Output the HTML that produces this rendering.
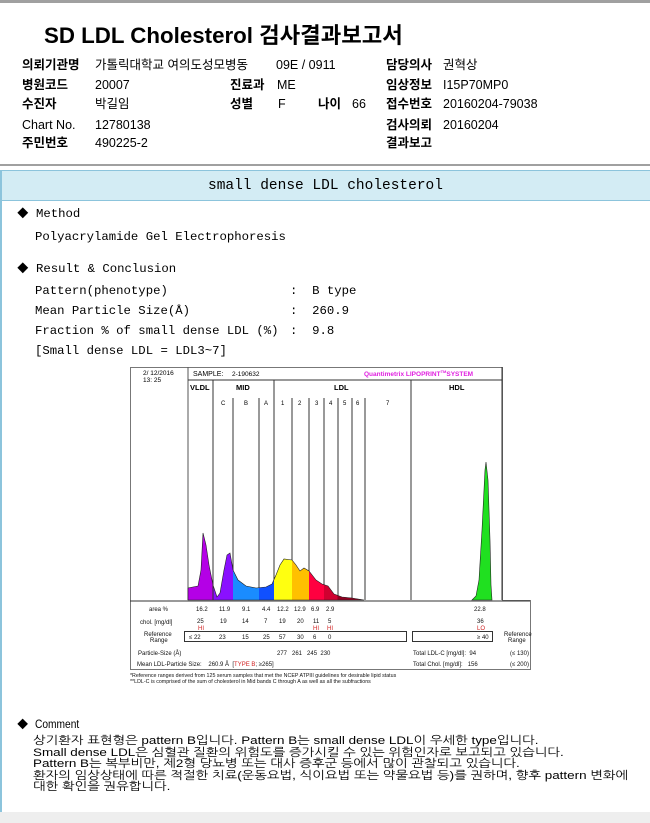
<!DOCTYPE html>
<html><head><meta charset="utf-8"><style>
body{margin:0;width:650px;height:823px;position:relative;background:#fff;overflow:hidden;font-family:"Liberation Sans","Noto Sans CJK KR",sans-serif;color:#000}
.a{position:absolute;white-space:nowrap}
.h{font-size:12.5px;line-height:15px}
.b{font-weight:bold}
.m{font-family:"Liberation Mono","NanumGothic",monospace;font-size:12.3px;line-height:15px}
.c{font-family:"Liberation Sans","NanumGothic",sans-serif;font-size:11.2px;line-height:11.6px;transform:scaleX(1.2);transform-origin:0 0}
svg text{font-family:"Liberation Sans",sans-serif}
</style></head><body>
<div class="a" style="left:0;top:0;width:650px;height:3px;background:#a0a0a0"></div>
<div class="a b" style="left:44px;top:22px;font-size:22.3px;line-height:28px;font-family:'Liberation Sans','Noto Sans CJK KR',sans-serif">SD LDL Cholesterol 검사결과보고서</div>

<div class="a h b" style="left:22px;top:58px">의뢰기관명</div><div class="a h" style="left:95px;top:58px">가톨릭대학교 여의도성모병동</div><div class="a h" style="left:276px;top:58px">09E / 0911</div>
<div class="a h b" style="left:386px;top:58px">담당의사</div><div class="a h" style="left:443px;top:58px">권혁상</div>
<div class="a h b" style="left:22px;top:78px">병원코드</div><div class="a h" style="left:95px;top:78px">20007</div><div class="a h b" style="left:230px;top:78px">진료과</div><div class="a h" style="left:277px;top:78px">ME</div>
<div class="a h b" style="left:386px;top:78px">임상정보</div><div class="a h" style="left:443px;top:78px">I15P70MP0</div>
<div class="a h b" style="left:22px;top:97px">수진자</div><div class="a h" style="left:95px;top:97px">박길임</div><div class="a h b" style="left:230px;top:97px">성별</div><div class="a h" style="left:278px;top:97px">F</div><div class="a h b" style="left:318px;top:97px">나이</div><div class="a h" style="left:352px;top:97px">66</div>
<div class="a h b" style="left:386px;top:97px">접수번호</div><div class="a h" style="left:443px;top:97px">20160204-79038</div>
<div class="a h" style="left:22px;top:118px">Chart No.</div><div class="a h" style="left:95px;top:118px">12780138</div>
<div class="a h b" style="left:386px;top:118px">검사의뢰</div><div class="a h" style="left:443px;top:118px">20160204</div>
<div class="a h b" style="left:22px;top:136px">주민번호</div><div class="a h" style="left:95px;top:136px">490225-2</div>
<div class="a h b" style="left:386px;top:136px">결과보고</div>

<div class="a" style="left:0;top:164px;width:650px;height:2px;background:#a0a0a0"></div>
<div class="a" style="left:0;top:170px;width:650px;height:29px;background:#d3ecf4;border-top:1px solid #8cc4dc;border-bottom:1px solid #8cc4dc"></div>
<div class="a" style="left:0;top:170px;width:2px;height:642px;background:#8cc4dc"></div>
<div class="a m" style="left:208px;top:177px;font-size:14.5px;line-height:18px">small dense LDL cholesterol</div>

<div class="a m" style="left:17px;top:207px">◆ Method</div>
<div class="a m" style="left:35px;top:230px">Polyacrylamide Gel Electrophoresis</div>
<div class="a m" style="left:17px;top:262px">◆ Result &amp; Conclusion</div>
<div class="a m" style="left:35px;top:284px">Pattern(phenotype)</div><div class="a m" style="left:290px;top:284px">:&nbsp; B type</div>
<div class="a m" style="left:35px;top:304px">Mean Particle Size(Å)</div><div class="a m" style="left:290px;top:304px">:&nbsp; 260.9</div>
<div class="a m" style="left:35px;top:324px">Fraction % of small dense LDL (%)</div><div class="a m" style="left:290px;top:324px">:&nbsp; 9.8</div>
<div class="a m" style="left:35px;top:344px">[Small dense LDL = LDL3~7]</div>

<svg class="a" style="left:0;top:0" width="650" height="823">
<defs><linearGradient id="g" gradientUnits="userSpaceOnUse" x1="188" x2="364" y1="0" y2="0">
<stop offset="0" stop-color="#b400e6"/><stop offset="0.142" stop-color="#b400e6"/>
<stop offset="0.142" stop-color="#8a10ff"/><stop offset="0.256" stop-color="#8a10ff"/>
<stop offset="0.256" stop-color="#1a8cff"/><stop offset="0.403" stop-color="#1a8cff"/>
<stop offset="0.403" stop-color="#1050ff"/><stop offset="0.489" stop-color="#1050ff"/>
<stop offset="0.489" stop-color="#ffff10"/><stop offset="0.591" stop-color="#ffff10"/>
<stop offset="0.591" stop-color="#ffc000"/><stop offset="0.688" stop-color="#ffc000"/>
<stop offset="0.688" stop-color="#ff0040"/><stop offset="0.773" stop-color="#ff0040"/>
<stop offset="0.773" stop-color="#d00030"/><stop offset="0.85" stop-color="#d00030"/>
<stop offset="0.85" stop-color="#900020"/><stop offset="1" stop-color="#900020"/>
</linearGradient></defs>
<path d="M130.5,367.5 H502.5 V600.5 H530.5 V669.5 H130.5 Z" fill="#fff" stroke="#777"/>
<line x1="188" y1="367" x2="188" y2="600" stroke="#555"/>
<line x1="188" y1="380" x2="502" y2="380" stroke="#333"/>
<line x1="502" y1="367" x2="502" y2="600" stroke="#333"/>
<text x="143" y="375" font-size="6.5">2/ 12/2016</text><text x="143" y="382" font-size="6.5">13: 25</text>
<text x="193" y="376" font-size="7">SAMPLE:</text><text x="232" y="376" font-size="6.5">2-190632</text>
<text x="364" y="376" font-size="6.5" fill="#e020e0" font-weight="bold">Quantimetrix LIPOPRINT<tspan font-size="4" dy="-3">TM</tspan><tspan dy="3">SYSTEM</tspan></text>
<g stroke="#333"><line x1="213" y1="380" x2="213" y2="600"/><line x1="274" y1="380" x2="274" y2="600"/><line x1="411" y1="380" x2="411" y2="600"/>
<line x1="233" y1="398" x2="233" y2="600"/><line x1="259" y1="398" x2="259" y2="600"/><line x1="292" y1="398" x2="292" y2="600"/><line x1="309" y1="398" x2="309" y2="600"/><line x1="324" y1="398" x2="324" y2="600"/><line x1="338" y1="398" x2="338" y2="600"/><line x1="352" y1="398" x2="352" y2="600"/><line x1="365" y1="398" x2="365" y2="600"/></g>
<g font-size="7.5" font-weight="bold"><text x="190" y="390">VLDL</text><text x="236" y="390">MID</text><text x="334" y="390">LDL</text><text x="449" y="390">HDL</text></g>
<g font-size="6"><text x="221" y="405">C</text><text x="244" y="405">B</text><text x="264" y="405">A</text><text x="281" y="405">1</text><text x="298" y="405">2</text><text x="315" y="405">3</text><text x="329" y="405">4</text><text x="343" y="405">5</text><text x="356" y="405">6</text><text x="386" y="405">7</text></g>
<path d="M188,600 L188,588 L198,586 L201,570 L203,533 L206,545 L209,565 L213,585 L217,597 L220,593 L224,570 L227,555 L230,553 L233,570 L238,580 L246,586 L256,588 L266,587 L272,584 L276,575 L280,565 L284,559 L292,560 L296,565 L300,571 L304,568 L309,571 L316,580 L322,584 L328,586 L334,594 L342,597 L352,598 L364,600 Z" fill="url(#g)" stroke="#222" stroke-width="0.6"/>
<line x1="213" y1="580" x2="213" y2="600" stroke="#333"/>
<path d="M472,600 L476,596 L479,580 L482,530 L485,470 L486,462 L488,480 L490,540 L491,585 L492,600 Z" fill="#20e020" stroke="#222" stroke-width="0.6"/>
<line x1="130" y1="601" x2="530" y2="601" stroke="#333"/>
<g font-size="6" fill="#111">
<text x="149" y="611">area %</text><text x="140" y="624">chol. [mg/dl]</text>
<text x="144" y="636">Reference</text><text x="150" y="642">Range</text>
<text x="138" y="655">Particle-Size (Å)</text>
<text x="137" y="666">Mean LDL-Particle Size:&nbsp;&nbsp;&nbsp; 260.9 Å&nbsp; [<tspan fill="#d02020">TYPE B</tspan>; ≥265]</text>
<text x="196" y="611">16.2</text><text x="219" y="611">11.9</text><text x="242" y="611">9.1</text><text x="262" y="611">4.4</text><text x="277" y="611">12.2</text><text x="294" y="611">12.9</text><text x="311" y="611">6.9</text><text x="326" y="611">2.9</text><text x="474" y="611">22.8</text>
<text x="197" y="623">25</text><text x="220" y="623">19</text><text x="242" y="623">14</text><text x="264" y="623">7</text><text x="279" y="623">19</text><text x="297" y="623">20</text><text x="313" y="623">11</text><text x="328" y="623">5</text><text x="477" y="623">36</text>
<g fill="#d02020"><text x="198" y="630">HI</text><text x="313" y="630">HI</text><text x="327" y="630">HI</text><text x="477" y="630">LO</text></g>
<text x="189" y="639">≤ 22</text><text x="219" y="639">23</text><text x="242" y="639">15</text><text x="263" y="639">25</text><text x="279" y="639">57</text><text x="297" y="639">30</text><text x="313" y="639">6</text><text x="328" y="639">0</text><text x="477" y="639">≥ 40</text>
<text x="277" y="655">277&nbsp;&nbsp; 261&nbsp;&nbsp; 245&nbsp; 230</text>
<text x="413" y="655">Total LDL-C [mg/dl]:&nbsp; 94</text><text x="413" y="666">Total Chol. [mg/dl]:&nbsp;&nbsp; 156</text>
<text x="504" y="636">Reference</text><text x="508" y="642">Range</text><text x="510" y="655">(≤ 130)</text><text x="510" y="666">(≤ 200)</text>
<text x="130" y="677" font-size="5.3">*Reference ranges derived from 125 serum samples that met the NCEP ATPIII guidelines for desirable lipid status</text>
<text x="130" y="683" font-size="5.3">**LDL-C is comprised of the sum of cholesterol in Mid bands C through A as well as all the subfractions</text>
</g>
<rect x="184.5" y="631.5" width="222" height="10" fill="none" stroke="#333"/>
<rect x="412.5" y="631.5" width="80" height="10" fill="none" stroke="#333"/>
</svg>

<div class="a m" style="left:17px;top:717px;font-size:12px">◆ <span style="font-family:'Liberation Sans',sans-serif;font-size:12px;display:inline-block;transform:scaleX(0.85);transform-origin:0 0">Comment</span></div>
<div class="a c" style="left:33px;top:736px">상기환자 표현형은 pattern B입니다. Pattern B는 small dense LDL이 우세한 type입니다.<br>Small dense LDL은 심혈관 질환의 위험도를 증가시킬 수 있는 위험인자로 보고되고 있습니다.<br>Pattern B는 복부비만, 제2형 당뇨병 또는 대사 증후군 등에서 많이 관찰되고 있습니다.<br>환자의 임상상태에 따른 적절한 치료(운동요법, 식이요법 또는 약물요법 등)를 권하며, 향후 pattern 변화에<br>대한 확인을 권유합니다.</div>
<div class="a" style="left:0;top:812px;width:650px;height:11px;background:#eeeeee"></div>
</body></html>
